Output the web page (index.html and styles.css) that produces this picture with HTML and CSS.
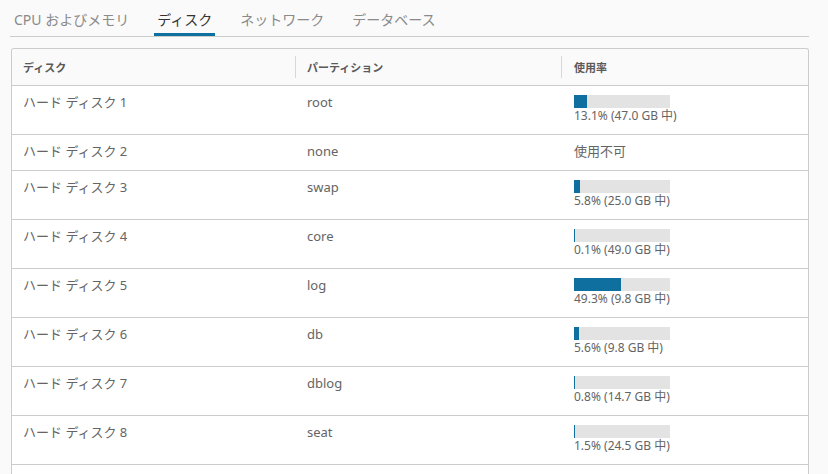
FILE: index.html
```html
<!DOCTYPE html>
<html lang="ja">
<head>
<meta charset="utf-8">
<link rel="stylesheet" href="styles.css">
</head>
<body>
<nav class="tabs">
  <span class="tab">CPU およびメモリ</span>
  <span class="tab active">ディスク</span>
  <span class="tab">ネットワーク</span>
  <span class="tab">データベース</span>
</nav>
<div class="grid">
  <div class="head">
    <div class="hcell c1">ディスク</div>
    <div class="hcell c2"><span class="sep"></span><span class="htext">パーティション</span></div>
    <div class="hcell c3"><span class="sep"></span><span class="htext">使用率</span></div>
  </div>
  <div class="row">
    <div class="cell c1">ハード ディスク 1</div>
    <div class="cell c2">root</div>
    <div class="cell c3 usage"><div class="bar"><div class="fill" style="width:13.1%"></div></div><div class="pct">13.1% (47.0 GB 中)</div></div>
  </div>
  <div class="row">
    <div class="cell c1">ハード ディスク 2</div>
    <div class="cell c2">none</div>
    <div class="cell c3">使用不可</div>
  </div>
  <div class="row">
    <div class="cell c1">ハード ディスク 3</div>
    <div class="cell c2">swap</div>
    <div class="cell c3 usage"><div class="bar"><div class="fill" style="width:5.8%"></div></div><div class="pct">5.8% (25.0 GB 中)</div></div>
  </div>
  <div class="row">
    <div class="cell c1">ハード ディスク 4</div>
    <div class="cell c2">core</div>
    <div class="cell c3 usage"><div class="bar"><div class="fill" style="width:0.1%"></div></div><div class="pct">0.1% (49.0 GB 中)</div></div>
  </div>
  <div class="row">
    <div class="cell c1">ハード ディスク 5</div>
    <div class="cell c2">log</div>
    <div class="cell c3 usage"><div class="bar"><div class="fill" style="width:49.3%"></div></div><div class="pct">49.3% (9.8 GB 中)</div></div>
  </div>
  <div class="row">
    <div class="cell c1">ハード ディスク 6</div>
    <div class="cell c2">db</div>
    <div class="cell c3 usage"><div class="bar"><div class="fill" style="width:5.6%"></div></div><div class="pct">5.6% (9.8 GB 中)</div></div>
  </div>
  <div class="row">
    <div class="cell c1">ハード ディスク 7</div>
    <div class="cell c2">dblog</div>
    <div class="cell c3 usage"><div class="bar"><div class="fill" style="width:0.8%"></div></div><div class="pct">0.8% (14.7 GB 中)</div></div>
  </div>
  <div class="row">
    <div class="cell c1">ハード ディスク 8</div>
    <div class="cell c2">seat</div>
    <div class="cell c3 usage"><div class="bar"><div class="fill" style="width:1.5%"></div></div><div class="pct">1.5% (24.5 GB 中)</div></div>
  </div>
  <div class="row blank">
    <div class="cell c1"></div>
    <div class="cell c2"></div>
    <div class="cell c3"></div>
  </div>
</div>
</body>
</html>
```
FILE: styles.css
```css
html, body {
  margin: 0;
  padding: 0;
  background: #fafafa;
  font-family: "Noto Sans", "Noto Sans CJK JP", sans-serif;
  color: #565656;
  overflow: hidden;
}

.tabs {
  display: flex;
  gap: 22px;
  margin-left: 10px;
  width: 799px;
  padding-left: 1px;
  box-sizing: border-box;
  border-bottom: 1px solid #cccccc;
}

.tab {
  padding: 10px 3px 3px;
  line-height: 20px;
  font-size: 14px;
  color: #8a8a8a;
  border-bottom: 3px solid transparent;
  white-space: nowrap;
}

.tab.active {
  color: #333333;
  border-bottom-color: #0f6f9e;
}

.grid {
  margin: 11px 0 0 11px;
  width: 798px;
  box-sizing: border-box;
  border: 1px solid #cccccc;
  border-bottom: none;
  border-radius: 3px 3px 0 0;
  background: #ffffff;
}

.head, .row {
  display: grid;
  grid-template-columns: 283px 266px 1fr;
}

.head {
  background: #fafafa;
  height: 36px;
  border-radius: 3px 3px 0 0;
}

.hcell {
  display: flex;
  align-items: center;
  font-size: 11px;
  font-weight: 700;
  color: #5a5a5a;
}

.hcell.c1 { padding-left: 11px; }

.sep {
  width: 1px;
  height: 22px;
  background: #d8d8d8;
}

.hcell.c2 .htext { margin-left: 11px; }
.hcell.c3 .htext { margin-left: 12px; }

.row {
  border-top: 1px solid #cccccc;
}

.cell {
  font-size: 13px;
  line-height: 15px;
  padding: 9px 12px 11px;
  color: #646464;
}

.cell.c1 { padding-left: 11px; }
.cell.c2 { padding-left: 12px; }
.cell.c3 { padding-left: 13px; }

.bar {
  width: 96px;
  height: 13px;
  background: #e3e3e3;
  display: flex;
}

.fill {
  min-width: 1px;
  background: #0f6f9e;
}

.pct {
  font-size: 12px;
  line-height: 15px;
  color: #646464;
}

.row.blank .cell { height: 28px; }
```
